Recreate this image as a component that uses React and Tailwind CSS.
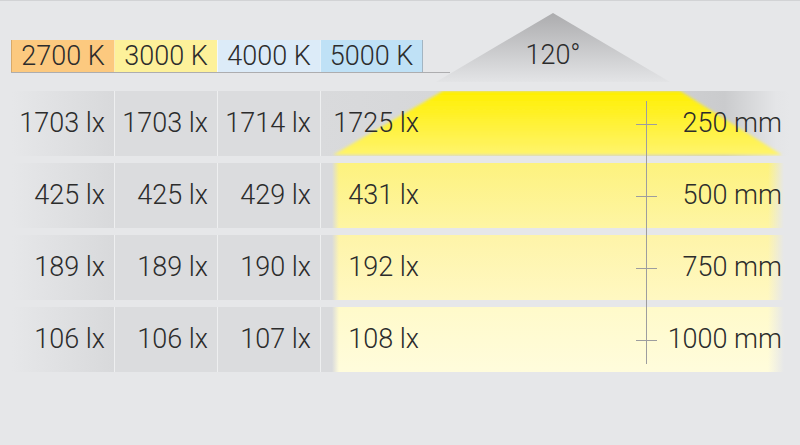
const tags = [
  { label: "2700 K", cls: "bg-[#fcc97f] border-l border-[#d8aa6a]" },
  { label: "3000 K", cls: "bg-[#fdf19a] border-l border-[#fbe9b6]" },
  { label: "4000 K", cls: "bg-[#dcebf8] border-l border-[#f4f8fb]" },
  { label: "5000 K", cls: "bg-[#bfe1f6] border-l border-[#e4f1fa] border-r border-r-[#a3b5c2]" },
];

const rows = [
  { lx: ["1703 lx", "1703 lx", "1714 lx", "1725 lx"], mm: "250 mm", beam: true },
  {
    lx: ["425 lx", "425 lx", "429 lx", "431 lx"],
    mm: "500 mm",
    bg: "bg-[linear-gradient(to_right,#d9dadc_0px,#d9dadc_11px,rgba(217,218,220,0)_18px,rgba(230,231,233,0)_calc(100%_-_22px),#e6e7e9_calc(100%_-_6px)),linear-gradient(#fdf27e,#fef5a4)]",
  },
  {
    lx: ["189 lx", "189 lx", "190 lx", "192 lx"],
    mm: "750 mm",
    bg: "bg-[linear-gradient(to_right,#d9dadc_0px,#d9dadc_11px,rgba(217,218,220,0)_18px,rgba(230,231,233,0)_calc(100%_-_22px),#e6e7e9_calc(100%_-_6px)),linear-gradient(#fef4a8,#fff8c2)]",
  },
  {
    lx: ["106 lx", "106 lx", "107 lx", "108 lx"],
    mm: "1000 mm",
    bg: "bg-[linear-gradient(to_right,#d9dadc_0px,#d9dadc_11px,rgba(217,218,220,0)_18px,rgba(230,231,233,0)_calc(100%_-_22px),#e6e7e9_calc(100%_-_6px)),linear-gradient(#fffaca,#fffcdc)]",
  },
];

// gray cone above the first row
const Cone = () => (
  <svg className="absolute inset-0" width="234" height="69" viewBox="0 0 234 69">
    <defs>
      <linearGradient id="cone" x1="0" y1="0" x2="0" y2="1">
        <stop offset="0" stopColor="#acacae" />
        <stop offset="1" stopColor="#e3e4e6" />
      </linearGradient>
    </defs>
    <polygon points="117,0 234,69 0,69" fill="url(#cone)" />
  </svg>
);

// the lit trapezoid in the 250 mm row
const Beam = () => (
  <svg className="absolute inset-0" width="469" height="65" viewBox="0 0 469 65">
    <defs>
      <linearGradient id="band" x1="0" y1="0" x2="1" y2="0">
        <stop offset="0" stopColor="#d9dadc" />
        <stop offset="0.72" stopColor="#d0d1d3" />
        <stop offset="0.86" stopColor="#cacbcd" />
        <stop offset="0.97" stopColor="#e4e5e7" />
        <stop offset="1" stopColor="#e6e7e9" />
      </linearGradient>
      <linearGradient id="lit" x1="0" y1="0" x2="0" y2="1">
        <stop offset="0" stopColor="#fff000" />
        <stop offset="1" stopColor="#fff46c" />
      </linearGradient>
      <filter id="soft" x="-5%" y="-10%" width="110%" height="120%">
        <feGaussianBlur stdDeviation="1.6" />
      </filter>
    </defs>
    <rect width="469" height="65" fill="url(#band)" />
    <polygon points="122,0 359,0 461,64 12,64" fill="url(#lit)" filter="url(#soft)" />
  </svg>
);

const Axis = () => (
  <svg className="absolute left-[636px] top-[100px]" width="21" height="264" viewBox="0 0 21 264">
    <g stroke="#9d9d9f" strokeWidth="1">
      <line x1="10.5" y1="0" x2="10.5" y2="263" />
      <line x1="0" y1="23.5" x2="21" y2="23.5" />
      <line x1="0" y1="95.5" x2="21" y2="95.5" />
      <line x1="0" y1="167.5" x2="21" y2="167.5" />
      <line x1="0" y1="239.5" x2="21" y2="239.5" />
    </g>
  </svg>
);

const Row = ({ row }) => (
  <div className="flex h-[65px] text-[27px] leading-[65px]">
    <div className="w-[102px] pr-[9px] text-right bg-[linear-gradient(to_right,#e6e7e9,#d8d9db)]">{row.lx[0]}</div>
    <div className="w-[103px] pr-[9px] text-right border-l border-[#eeeff0] bg-[#dbdcde]">{row.lx[1]}</div>
    <div className="w-[103px] pr-[9px] text-right border-l border-[#eeeff0] bg-[#dbdcde]">{row.lx[2]}</div>
    <div className={`relative flex-1 flex border-l border-[#eeeff0] ${row.bg || ""}`}>
      {row.beam && <Beam />}
      <span className="relative w-[98px] text-right">{row.lx[3]}</span>
      <span className="relative flex-1 pr-[8px] text-right">{row.mm}</span>
    </div>
  </div>
);

export default function App() {
  return (
    <div className="relative w-[800px] h-[445px] overflow-hidden border-t border-[#d2d3d5] bg-[#e6e7e9] text-[#2c2c2c] font-light font-[Roboto,'Liberation_Sans',sans-serif]">
      <div className="flex h-[90px] pl-[11px]">
        <div className="mt-[39px] w-[439px] h-[33px] flex border-b border-[#adadaf]">
          {tags.map((t) => (
            <div key={t.label} className={`w-[103px] h-[32px] text-center text-[27px] leading-[32px] ${t.cls}`}>
              {t.label}
            </div>
          ))}
        </div>
        <div className="relative ml-[-14px] mt-[12px] w-[234px] h-[69px]">
          <Cone />
          <div className="relative pt-[27px] text-center text-[27px] leading-[30px]">120°</div>
        </div>
      </div>
      <div className="flex flex-col gap-[7px] pl-[12px] pr-[10px]">
        {rows.map((r) => (
          <Row key={r.mm} row={r} />
        ))}
      </div>
      <Axis />
    </div>
  );
}
